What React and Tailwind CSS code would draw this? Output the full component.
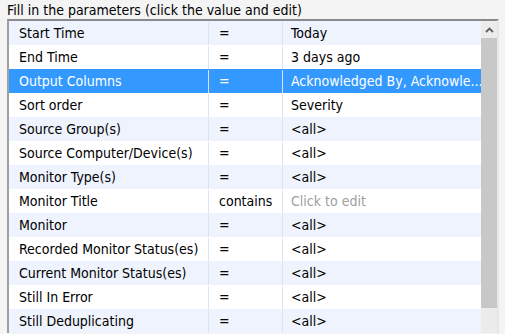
const rows = [
  ["Start Time", "=", "Today"],
  ["End Time", "=", "3 days ago"],
  ["Output Columns", "=", "Acknowledged By, Acknowle..."],
  ["Sort order", "=", "Severity"],
  ["Source Group(s)", "=", "<all>"],
  ["Source Computer/Device(s)", "=", "<all>"],
  ["Monitor Type(s)", "=", "<all>"],
  ["Monitor Title", "contains", "Click to edit"],
  ["Monitor", "=", "<all>"],
  ["Recorded Monitor Status(es)", "=", "<all>"],
  ["Current Monitor Status(es)", "=", "<all>"],
  ["Still In Error", "=", "<all>"],
  ["Still Deduplicating", "=", "<all>"],
];

export default function App() {
  return (
    <div
      className="w-[505px] h-[334px] overflow-hidden bg-[#f4f4f4] text-[14px] text-black"
      style={{ fontFamily: "'DejaVu Sans Condensed', 'DejaVu Sans', sans-serif" }}
    >
      <div className="h-[19px] pl-[7px] pt-[1px] leading-[19px]">
        Fill in the parameters (click the value and edit)
      </div>
      <div className="ml-[7px] w-[492px] flex border-t-2 border-l-2 border-t-[#8a8a8a] border-l-[#a0a0a0] border-r-2 border-r-[#e6e6e6]">
        <div className="w-[472px]">
          {rows.map(([name, op, value], i) => {
            const selected = i === 2;
            const bg = selected ? "bg-[#3399ff] text-white" : i % 2 === 0 ? "bg-[#eef3fd]" : "bg-white";
            return (
              <div key={name} className={`flex h-[24px] pt-[1px] ${bg}`}>
                <div className="w-[200px] pl-[10px] border-r border-[#dde3ec] flex items-center">
                  {name}
                </div>
                <div className="w-[74px] pl-[10px] border-r border-[#dde3ec] flex items-center">
                  {op}
                </div>
                <div
                  className={`flex-1 pl-[8px] flex items-center whitespace-nowrap overflow-hidden ${
                    value === "Click to edit" ? "text-[#a0a0a0]" : ""
                  }`}
                >
                  {value}
                </div>
              </div>
            );
          })}
        </div>
        <div className="w-[16px] bg-[#ececec] flex flex-col">
          <div className="h-[17px] flex items-center justify-center">
            <svg width="9" height="6" viewBox="0 0 9 6">
              <path d="M1 5 L4.5 1.5 L8 5" stroke="#606060" strokeWidth="1.8" fill="none" />
            </svg>
          </div>
          <div className="h-[270px] bg-[#c8c8c8]" />
        </div>
      </div>
    </div>
  );
}
